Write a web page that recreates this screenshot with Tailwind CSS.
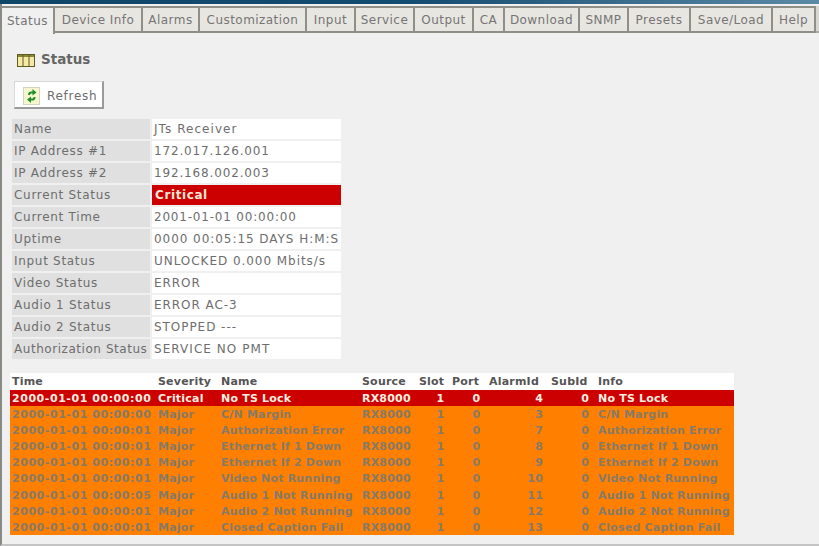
<!DOCTYPE html>
<html lang="en">
<head>
    <meta charset="UTF-8">
    <title>Status</title>
    <script src="https://cdn.jsdelivr.net/npm/@tailwindcss/browser@4"></script>
</head>
<body class="bg-[#f0f0f0] font-['DejaVu_Sans',sans-serif] text-[#6e6e6e] overflow-hidden">
    <div class="w-[819px] h-[546px] overflow-hidden flex flex-col">
        <!-- Top strip -->
        <div class="h-[4px] bg-gradient-to-r from-[#0f4668] via-[#124c70] to-[#5b8aa6]"></div>

        <div class="flex-1 flex flex-col border-l-2 border-l-[#8a8a84] border-b-2 border-b-[#c4c4c4]">
            <!-- Tabs -->
            <div class="flex h-[29px] pt-[2px] text-[12px] tracking-[0.45px] leading-none text-[#757575]">
                <div class="w-[53px] flex items-center justify-center border-t-2 border-r-2 border-[#8f8f88] h-[28px]">Status</div>
                <div class="w-[88px] flex items-center justify-center border-t-2 border-b-2 border-r-2 border-[#8f8f88] bg-[#e8e6e1]">Device Info</div>
                <div class="w-[57px] flex items-center justify-center border-t-2 border-b-2 border-r-2 border-[#8f8f88] bg-[#e8e6e1]">Alarms</div>
                <div class="w-[107px] flex items-center justify-center border-t-2 border-b-2 border-r-2 border-[#8f8f88] bg-[#e8e6e1]">Customization</div>
                <div class="w-[49px] flex items-center justify-center border-t-2 border-b-2 border-r-2 border-[#8f8f88] bg-[#e8e6e1]">Input</div>
                <div class="w-[59px] flex items-center justify-center border-t-2 border-b-2 border-r-2 border-[#8f8f88] bg-[#e8e6e1]">Service</div>
                <div class="w-[59px] flex items-center justify-center border-t-2 border-b-2 border-r-2 border-[#8f8f88] bg-[#e8e6e1]">Output</div>
                <div class="w-[31px] flex items-center justify-center border-t-2 border-b-2 border-r-2 border-[#8f8f88] bg-[#e8e6e1]">CA</div>
                <div class="w-[75px] flex items-center justify-center border-t-2 border-b-2 border-r-2 border-[#8f8f88] bg-[#e8e6e1]">Download</div>
                <div class="w-[49px] flex items-center justify-center border-t-2 border-b-2 border-r-2 border-[#8f8f88] bg-[#e8e6e1]">SNMP</div>
                <div class="w-[62px] flex items-center justify-center border-t-2 border-b-2 border-r-2 border-[#8f8f88] bg-[#e8e6e1]">Presets</div>
                <div class="w-[82px] flex items-center justify-center border-t-2 border-b-2 border-r-2 border-[#8f8f88] bg-[#e8e6e1]">Save/Load</div>
                <div class="w-[43px] flex items-center justify-center border-t-2 border-b-2 border-r-2 border-[#8f8f88] bg-[#e8e6e1]">Help</div>
                <div class="flex-1 border-b-2 border-[#a8a8a2] bg-[#d8d6d0]"></div>
            </div>

            <!-- Heading -->
            <div class="flex items-center gap-[6px] pl-[15px] mt-[18px] h-[18px]">
                <svg width="18" height="13" viewBox="0 0 18 13">
                    <rect x="0.5" y="0.5" width="17" height="12" fill="#f6e9a6" stroke="#5d5a22"/>
                    <rect x="1" y="1" width="16" height="2" fill="#8b8a33"/>
                    <path d="M6 1V12M12 1V12" stroke="#5d5a22"/>
                </svg>
                <span class="text-[13.5px] font-bold text-[#666] leading-none">Status</span>
            </div>

            <!-- Refresh button -->
            <div class="pl-[12px] mt-[12px]">
                <div class="w-[90px] h-[28px] bg-white border border-[#d8d8d8] border-r-2 border-b-2 border-r-[#9a9a9a] border-b-[#9a9a9a] flex items-center pl-[8px] gap-[6px] text-[12px] tracking-[0.7px] leading-none pt-[2px]">
                    <svg width="18" height="18" viewBox="0 0 18 18">
                        <rect x="0.5" y="0.5" width="16" height="17" fill="#f6f7cf" stroke="#d4d4c0"/>
                        <path d="M5 8 C5 5 7 4 9.5 4.5 L9.5 2 L13.5 5.5 L9.5 8.5 L9.5 6.5 C8 6.2 7 6.8 7 8 Z" fill="#1f8f2a"/>
                        <path d="M12.5 10 C12.5 13 10.5 14 8 13.5 L8 16 L4 12.5 L8 9.5 L8 11.5 C9.5 11.8 10.5 11.2 10.5 10 Z" fill="#1f8f2a"/>
                    </svg>
                    <span>Refresh</span>
                </div>
            </div>

            <!-- Status table -->
            <div class="pl-[10px] mt-[10px] grid grid-cols-[138px_189px] gap-x-[2px] gap-y-[2px] w-[340px] text-[12px] leading-[20px]">
                <div class="bg-[#e0e0e0] h-[20px] pl-[2px] tracking-[0.7px]">Name</div><div class="bg-white h-[20px] pl-[2px] tracking-[1.05px]">JTs Receiver</div>
                <div class="bg-[#e0e0e0] h-[20px] pl-[2px] tracking-[0.7px]">IP Address #1</div><div class="bg-white h-[20px] pl-[2px] tracking-[0.85px]">172.017.126.001</div>
                <div class="bg-[#e0e0e0] h-[20px] pl-[2px] tracking-[0.7px]">IP Address #2</div><div class="bg-white h-[20px] pl-[2px] tracking-[0.85px]">192.168.002.003</div>
                <div class="bg-[#e0e0e0] h-[20px] pl-[2px] tracking-[0.7px]">Current Status</div><div class="bg-[#cc0000] h-[20px] pl-[3px] text-[#f5e6d8] font-bold tracking-[0.6px]">Critical</div>
                <div class="bg-[#e0e0e0] h-[20px] pl-[2px] tracking-[0.7px]">Current Time</div><div class="bg-white h-[20px] pl-[2px] tracking-[0.8px]">2001-01-01 00:00:00</div>
                <div class="bg-[#e0e0e0] h-[20px] pl-[2px] tracking-[0.7px]">Uptime</div><div class="bg-white h-[20px] pl-[2px] tracking-[0.95px]">0000 00:05:15 DAYS H:M:S</div>
                <div class="bg-[#e0e0e0] h-[20px] pl-[2px] tracking-[0.7px]">Input Status</div><div class="bg-white h-[20px] pl-[2px] tracking-[0.95px]">UNLOCKED 0.000 Mbits/s</div>
                <div class="bg-[#e0e0e0] h-[20px] pl-[2px] tracking-[0.7px]">Video Status</div><div class="bg-white h-[20px] pl-[2px] tracking-[0.95px]">ERROR</div>
                <div class="bg-[#e0e0e0] h-[20px] pl-[2px] tracking-[0.7px]">Audio 1 Status</div><div class="bg-white h-[20px] pl-[2px] tracking-[0.95px]">ERROR AC-3</div>
                <div class="bg-[#e0e0e0] h-[20px] pl-[2px] tracking-[0.7px]">Audio 2 Status</div><div class="bg-white h-[20px] pl-[2px] tracking-[0.95px]">STOPPED ---</div>
                <div class="bg-[#e0e0e0] h-[20px] pl-[2px] tracking-[0.55px]">Authorization Status</div><div class="bg-white h-[20px] pl-[2px] tracking-[1.05px]">SERVICE NO PMT</div>
            </div>

            <!-- Alarm table -->
            <div class="pl-[8px] mt-[14px]">
                <table class="table-fixed w-[724px] border-collapse text-[11px] font-bold leading-[15.1px] tracking-[0.2px] whitespace-nowrap text-[#877a66] [&_td]:pt-[1px] [&_th]:pt-[1px]">
                    <colgroup>
                        <col class="w-[148px]"><col class="w-[63px]"><col class="w-[141px]"><col class="w-[57px]"><col class="w-[33px]"><col class="w-[37px]"><col class="w-[62px]"><col class="w-[47px]"><col>
                    </colgroup>
                    <thead class="bg-white text-[#555]">
                        <tr class="h-[17px]">
                            <th class="text-left font-bold pl-[2px]">Time</th><th class="text-left font-bold">Severity</th><th class="text-left font-bold">Name</th><th class="text-left font-bold">Source</th><th class="text-left font-bold">Slot</th><th class="text-left font-bold">Port</th><th class="text-left font-bold">AlarmId</th><th class="text-left font-bold">SubId</th><th class="text-left font-bold">Info</th>
                        </tr>
                    </thead>
                    <tbody class="bg-[#ff8000]">
                        <tr class="h-[16px] bg-[#cc0000] text-[#fbeee0]">
                            <td class="pl-[2px] tracking-[0.55px]">2000-01-01 00:00:00</td><td>Critical</td><td>No TS Lock</td><td>RX8000</td><td class="text-center pl-[10px]">1</td><td class="text-center pl-[12px]">0</td><td class="text-right pr-[8px]">4</td><td class="text-right pr-[9px]">0</td><td>No TS Lock</td>
                        </tr>
                        <tr class="h-[16px]"><td class="pl-[2px] tracking-[0.55px]">2000-01-01 00:00:00</td><td>Major</td><td>C/N Margin</td><td>RX8000</td><td class="text-center pl-[10px]">1</td><td class="text-center pl-[12px]">0</td><td class="text-right pr-[8px]">3</td><td class="text-right pr-[9px]">0</td><td>C/N Margin</td></tr>
                        <tr class="h-[16px]"><td class="pl-[2px] tracking-[0.55px]">2000-01-01 00:00:01</td><td>Major</td><td>Authorization Error</td><td>RX8000</td><td class="text-center pl-[10px]">1</td><td class="text-center pl-[12px]">0</td><td class="text-right pr-[8px]">7</td><td class="text-right pr-[9px]">0</td><td>Authorization Error</td></tr>
                        <tr class="h-[16px]"><td class="pl-[2px] tracking-[0.55px]">2000-01-01 00:00:01</td><td>Major</td><td>Ethernet If 1 Down</td><td>RX8000</td><td class="text-center pl-[10px]">1</td><td class="text-center pl-[12px]">0</td><td class="text-right pr-[8px]">8</td><td class="text-right pr-[9px]">0</td><td>Ethernet If 1 Down</td></tr>
                        <tr class="h-[16px]"><td class="pl-[2px] tracking-[0.55px]">2000-01-01 00:00:01</td><td>Major</td><td>Ethernet If 2 Down</td><td>RX8000</td><td class="text-center pl-[10px]">1</td><td class="text-center pl-[12px]">0</td><td class="text-right pr-[8px]">9</td><td class="text-right pr-[9px]">0</td><td>Ethernet If 2 Down</td></tr>
                        <tr class="h-[16px]"><td class="pl-[2px] tracking-[0.55px]">2000-01-01 00:00:01</td><td>Major</td><td>Video Not Running</td><td>RX8000</td><td class="text-center pl-[10px]">1</td><td class="text-center pl-[12px]">0</td><td class="text-right pr-[8px]">10</td><td class="text-right pr-[9px]">0</td><td>Video Not Running</td></tr>
                        <tr class="h-[16px]"><td class="pl-[2px] tracking-[0.55px]">2000-01-01 00:00:05</td><td>Major</td><td>Audio 1 Not Running</td><td>RX8000</td><td class="text-center pl-[10px]">1</td><td class="text-center pl-[12px]">0</td><td class="text-right pr-[8px]">11</td><td class="text-right pr-[9px]">0</td><td>Audio 1 Not Running</td></tr>
                        <tr class="h-[16px]"><td class="pl-[2px] tracking-[0.55px]">2000-01-01 00:00:01</td><td>Major</td><td>Audio 2 Not Running</td><td>RX8000</td><td class="text-center pl-[10px]">1</td><td class="text-center pl-[12px]">0</td><td class="text-right pr-[8px]">12</td><td class="text-right pr-[9px]">0</td><td>Audio 2 Not Running</td></tr>
                        <tr class="h-[16px]"><td class="pl-[2px] tracking-[0.55px]">2000-01-01 00:00:01</td><td>Major</td><td>Closed Caption Fail</td><td>RX8000</td><td class="text-center pl-[10px]">1</td><td class="text-center pl-[12px]">0</td><td class="text-right pr-[8px]">13</td><td class="text-right pr-[9px]">0</td><td>Closed Caption Fail</td></tr>
                    </tbody>
                </table>
            </div>
        </div>
    </div>
</body>
</html>
